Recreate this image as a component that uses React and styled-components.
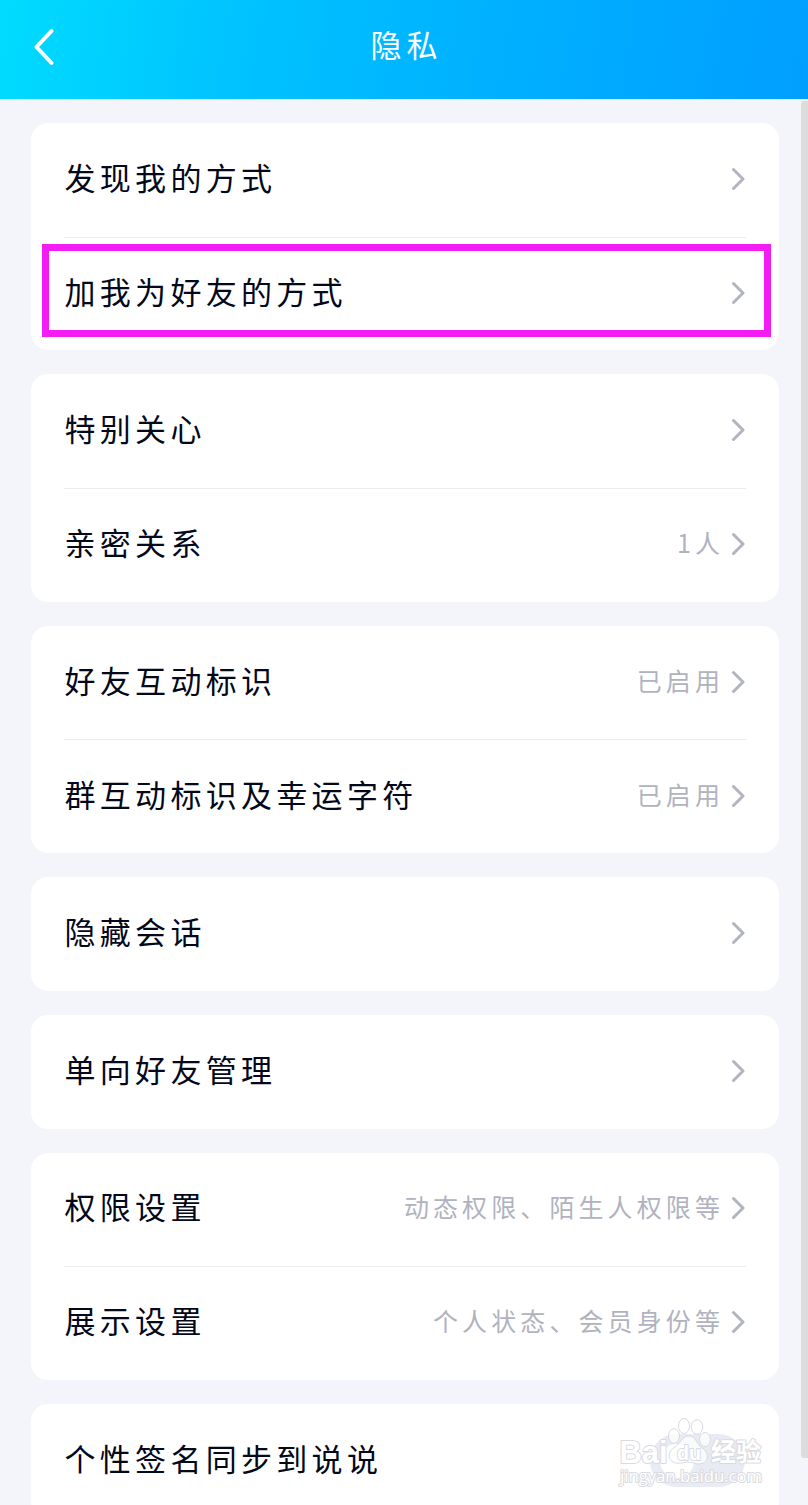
import React from 'react';
import styled, { createGlobalStyle } from 'styled-components';

const GlobalStyle = createGlobalStyle`
  * {
    box-sizing: border-box;
  }

  body {
    margin: 0;
    overflow: hidden;
    background-color: #f4f5fa;
  }
`;

const Page = styled.div`
  display: flex;
  flex-direction: column;
  width: 808px;
  height: 1505px;
  overflow: hidden;
  background-color: #f4f5fa;
  color: #03081a;
  font-family: 'KaiTi', 'Kaiti SC', 'STKaiti', 'Noto Sans CJK SC', sans-serif;
`;

const Header = styled.header`
  display: grid;
  grid-template-columns: 88px 1fr 88px;
  align-items: center;
  flex: none;
  height: 98.5px;
  padding-bottom: 4px;
  background: linear-gradient(100deg, #00dcff 0%, #00c4ff 28%, #00b2ff 58%, #009fff 100%);
`;

const BackButton = styled.button`
  display: flex;
  padding: 0 0 0 32px;
  border: none;
  background: none;
`;

const Title = styled.h1`
  margin: 0;
  padding: 0 0 6px 5px;
  color: white;
  font-size: 31px;
  font-weight: 400;
  line-height: 44px;
  letter-spacing: 5px;
  text-align: center;
`;

const Body = styled.div`
  display: flex;
  flex: 1;
  min-height: 0;
`;

const List = styled.main`
  display: flex;
  flex-direction: column;
  flex: none;
  gap: 24px;
  width: 748px;
  margin: 24.5px 22px 0 31px;
`;

const ScrollThumb = styled.div`
  width: 7px;
  height: 1357px;
  margin-top: 2px;
  border-radius: 3px 0 0 3px;
  background-color: #dcdcdc;
`;

const Card = styled.section`
  position: relative;
  flex: none;
  padding: 0 33px;
  border-radius: 17px;
  background-color: white;
`;

const Row = styled.div`
  display: flex;
  align-items: center;
  height: 113.7px;
  padding-right: 1px;

  & + & {
    height: 112.9px;
  }

  &:not(:last-of-type) {
    height: 114.5px;
    border-bottom: 1px solid #ebecef;
  }
`;

const Label = styled.span`
  flex: 1;
  padding-left: 0.5px;
  padding-bottom: 6px;
  font-size: 31px;
  line-height: 46px;
  letter-spacing: 4.3px;
  white-space: nowrap;
`;

const Value = styled.span`
  margin-right: 7px;
  padding-bottom: 6px;
  color: #b0b3bf;
  font-size: 25px;
  line-height: 38px;
  letter-spacing: 4.1px;
  white-space: nowrap;
`;

const Highlight = styled.aside`
  position: absolute;
  top: 121px;
  left: 11px;
  width: 729px;
  height: 93px;
  border: 7px solid #f41cf4;
`;

const Toggle = styled.span`
  display: flex;
  align-items: center;
  width: 95px;
  height: 53px;
  padding: 0 10px;
  border-radius: 27px;
  background-color: #e8ebf4;

  &::before {
    content: '';
    width: 34px;
    height: 34px;
    border-radius: 50%;
    background-color: white;
  }
`;

const Watermark = styled.svg`
  position: absolute;
  top: 1412px;
  left: 610px;

  text {
    paint-order: stroke;
    stroke-width: 2px;
    stroke-linejoin: round;
  }
`;

const groups = [
  [
    { label: '发现我的方式' },
    { label: '加我为好友的方式', highlighted: true },
  ],
  [{ label: '特别关心' }, { label: '亲密关系', value: '1人' }],
  [
    { label: '好友互动标识', value: '已启用' },
    { label: '群互动标识及幸运字符', value: '已启用' },
  ],
  [{ label: '隐藏会话' }],
  [{ label: '单向好友管理' }],
  [
    { label: '权限设置', value: '动态权限、陌生人权限等' },
    { label: '展示设置', value: '个人状态、会员身份等' },
  ],
  [{ label: '个性签名同步到说说', toggle: true }],
];

const Chevron = () => (
  <svg width="14" height="26" viewBox="0 0 14 26" fill="none">
    <path
      d="M2.5 2.5L12 12L2.5 21.5"
      stroke="#b2b4c1"
      strokeWidth="3"
      strokeLinecap="round"
      strokeLinejoin="round"
    />
  </svg>
);

const BaiduMark = () => (
  <Watermark width="160" height="80" viewBox="0 0 160 80">
    <g fill="white" stroke="#d9dadf" strokeWidth="1">
      <g fillOpacity="0.75">
        <ellipse cx="64" cy="24" rx="5.5" ry="7.3" />
        <ellipse cx="74" cy="14" rx="5.5" ry="7.5" />
        <ellipse cx="87" cy="15" rx="5.8" ry="7.2" />
        <ellipse cx="95" cy="27.5" rx="5.5" ry="7" />
        <path d="M79 24C86 24 87 33 92 36C101 42 98 52 89 52C85 52 82 50 78 50C74 50 71 52 66 51C57 49 57 40 65 35C70 32 72 24 79 24Z" />
      </g>
      <text
        x="9.5"
        y="50.5"
        fontSize="31"
        fontWeight="700"
        fontFamily="Liberation Sans, sans-serif"
        textLength="48"
        lengthAdjust="spacingAndGlyphs"
      >
        Bai
      </text>
      <text
        x="67"
        y="48"
        fontSize="21"
        fontWeight="700"
        fontFamily="Liberation Sans, sans-serif"
        textLength="24"
        lengthAdjust="spacingAndGlyphs"
      >
        du
      </text>
      <text
        x="101"
        y="49"
        fontSize="25"
        fontWeight="700"
        fontFamily="Noto Sans CJK SC, sans-serif"
        textLength="50"
      >
        经验
      </text>
      <text
        x="10"
        y="70"
        fontSize="16"
        fontFamily="Open Sans, sans-serif"
        textLength="142"
        lengthAdjust="spacingAndGlyphs"
      >
        jingyan.baidu.com
      </text>
    </g>
  </Watermark>
);

const App = () => (
  <Page>
    <GlobalStyle />
    <Header>
      <BackButton aria-label="返回">
        <svg width="24" height="40" viewBox="0 0 24 40" fill="none">
          <path
            d="M19.5 4L4.5 20L19.5 36"
            stroke="white"
            strokeWidth="4"
            strokeLinecap="round"
            strokeLinejoin="round"
          />
        </svg>
      </BackButton>
      <Title>隐私</Title>
    </Header>

    <Body>
      <List>
        {groups.map((rows, key) => (
          <Card key={key}>
            {rows.map((row) => (
              <Row key={row.label}>
                <Label>{row.label}</Label>
                {row.value ? <Value>{row.value}</Value> : null}
                {row.toggle ? <Toggle /> : <Chevron />}
              </Row>
            ))}
            {rows.some((row) => row.highlighted) ? <Highlight /> : null}
          </Card>
        ))}
      </List>
      <ScrollThumb />
    </Body>
    <BaiduMark />
  </Page>
);

export default App;
